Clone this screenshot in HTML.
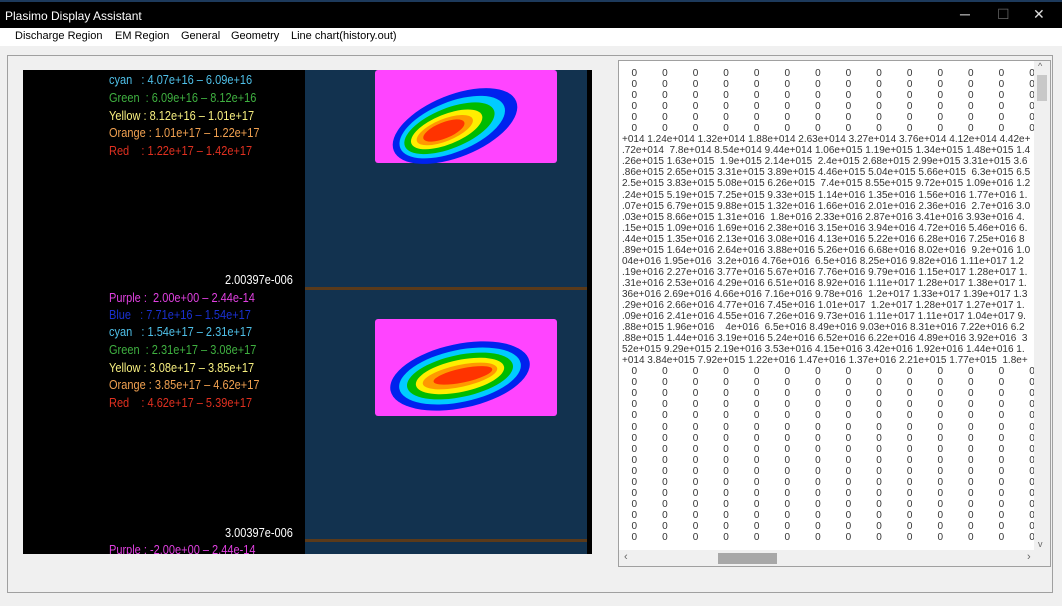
<!DOCTYPE html>
<html><head><meta charset="utf-8"><style>
*{margin:0;padding:0;box-sizing:border-box}
body{width:1062px;height:606px;background:#f0f0f0;font-family:"Liberation Sans",sans-serif;position:relative;overflow:hidden}
.title{position:absolute;left:0;top:0;width:1062px;height:28px;background:#000;color:#fff;font-size:12px;border-top:2px solid #1d3a5c}
.title span{position:absolute;left:5px;top:7px}
.wc{position:absolute;top:4px;color:#ddd;font-size:14px}
.menu{position:absolute;left:0;top:28px;width:1062px;height:18px;background:#fff;font-size:11px;color:#000}
.menu span{position:absolute;top:2px}
.grp{position:absolute;left:7px;top:55px;width:1046px;height:538px;border:1px solid #a0a0a0}
.img{position:absolute;left:23px;top:70px;width:569px;height:484px;background:#000;overflow:hidden}
.leg{position:absolute;font-family:"Liberation Sans Narrow","Liberation Sans",sans-serif;font-size:12.5px;white-space:pre;transform:scaleX(.88);transform-origin:left;line-height:14px}
.txt{position:absolute;left:618px;top:60px;width:433px;height:507px;background:#fff;border:1px solid #a0a0a0;overflow:hidden}
.rows{position:absolute;left:0;top:7px;font-size:10px;color:#333;line-height:11.05px}
.r{white-space:pre;height:11.05px;padding-left:3px}
.z{display:flex;padding-left:0}
.z b{font-weight:normal;width:30.6px;text-align:center;display:block}
</style></head><body>
<div class="title"><span>Plasimo Display Assistant</span><div class="wc" style="left:960px">─</div><div class="wc" style="left:997px;color:#666">☐</div><div class="wc" style="left:1033px">✕</div></div>
<div class="menu"><span style="left:15px">Discharge Region</span><span style="left:115px">EM Region</span><span style="left:181px">General</span><span style="left:231px">Geometry</span><span style="left:291px">Line chart(history.out)</span></div>
<div class="grp"></div>
<div class="img">
<svg width="569" height="484" style="position:absolute;left:0;top:0">
<rect x="282" y="0" width="282" height="484" fill="#12324f"/>
<rect x="282" y="217" width="282" height="3" fill="#5a3a1a"/>
<rect x="282" y="469" width="282" height="3" fill="#5a3a1a"/>
<rect x="352" y="0" width="182" height="93" rx="3" fill="#ff44ff"/>
<g transform="translate(432,56) rotate(-22)"><ellipse rx="66" ry="31" fill="#0022ee"/><ellipse rx="56" ry="25" fill="#00ccff" cx="-3"/><ellipse rx="48" ry="20" fill="#00bb00" cx="-6"/><ellipse rx="38" ry="15" fill="#ffee00" cx="-9"/><ellipse rx="30" ry="11" fill="#ff9900" cx="-11"/><ellipse rx="22" ry="8" fill="#ff3300" cx="-12"/></g>
<rect x="352" y="249" width="182" height="97" rx="3" fill="#ff44ff"/>
<g transform="translate(437,306) rotate(-12)"><ellipse rx="71" ry="32" fill="#0022ee"/><ellipse rx="62" ry="26" fill="#00ccff"/><ellipse rx="54" ry="21" fill="#00bb00"/><ellipse rx="45" ry="16" fill="#ffee00"/><ellipse rx="38" ry="11" fill="#ff9900"/><ellipse rx="30" ry="7" fill="#ff3300" cx="3"/></g>
</svg>
<div class="leg" style="left:86px;top:3px;color:#4fc0e8">cyan   : 4.07e+16 – 6.09e+16</div>
<div class="leg" style="left:86px;top:21px;color:#3fb040">Green  : 6.09e+16 – 8.12e+16</div>
<div class="leg" style="left:86px;top:39px;color:#f8f080">Yellow : 8.12e+16 – 1.01e+17</div>
<div class="leg" style="left:86px;top:56px;color:#f0a050">Orange : 1.01e+17 – 1.22e+17</div>
<div class="leg" style="left:86px;top:74px;color:#e03020">Red    : 1.22e+17 – 1.42e+17</div>
<div class="leg" style="left:202px;top:203px;color:#fff">2.00397e-006</div>
<div class="leg" style="left:86px;top:221px;color:#e040e0">Purple :  2.00e+00 – 2.44e-14</div>
<div class="leg" style="left:86px;top:238px;color:#1a30d0">Blue   : 7.71e+16 – 1.54e+17</div>
<div class="leg" style="left:86px;top:255px;color:#4fc0e8">cyan   : 1.54e+17 – 2.31e+17</div>
<div class="leg" style="left:86px;top:273px;color:#3fb040">Green  : 2.31e+17 – 3.08e+17</div>
<div class="leg" style="left:86px;top:291px;color:#f8f080">Yellow : 3.08e+17 – 3.85e+17</div>
<div class="leg" style="left:86px;top:308px;color:#f0a050">Orange : 3.85e+17 – 4.62e+17</div>
<div class="leg" style="left:86px;top:326px;color:#e03020">Red    : 4.62e+17 – 5.39e+17</div>
<div class="leg" style="left:202px;top:456px;color:#fff">3.00397e-006</div>
<div class="leg" style="left:86px;top:473px;color:#e040e0">Purple : -2.00e+00 – 2.44e-14</div>
</div>
<div class="txt">
<div class="rows" id="rows"></div>
<div style="position:absolute;right:0;top:0;width:16px;height:490px;background:#f0f0f0"><div style="position:absolute;left:3px;top:14px;width:10px;height:26px;background:#c8c8c8"></div><div style="position:absolute;left:4px;top:0;font-size:9px;color:#666">^</div><div style="position:absolute;left:4px;bottom:2px;font-size:9px;color:#666">v</div></div>
<div style="position:absolute;left:0;bottom:0;width:431px;height:16px;background:#f0f0f0"><div style="position:absolute;left:99px;top:3px;width:59px;height:11px;background:#a8a8a8"></div><div style="position:absolute;left:5px;top:1px;font-size:11px;color:#666">‹</div><div style="position:absolute;left:408px;top:1px;font-size:11px;color:#666">›</div></div>
</div>
<script>
var num=["+014 1.24e+014 1.32e+014 1.88e+014 2.63e+014 3.27e+014 3.76e+014 4.12e+014 4.42e+",
".72e+014  7.8e+014 8.54e+014 9.44e+014 1.06e+015 1.19e+015 1.34e+015 1.48e+015 1.4",
".26e+015 1.63e+015  1.9e+015 2.14e+015  2.4e+015 2.68e+015 2.99e+015 3.31e+015 3.6",
".86e+015 2.65e+015 3.31e+015 3.89e+015 4.46e+015 5.04e+015 5.66e+015  6.3e+015 6.5",
"2.5e+015 3.83e+015 5.08e+015 6.26e+015  7.4e+015 8.55e+015 9.72e+015 1.09e+016 1.2",
".24e+015 5.19e+015 7.25e+015 9.33e+015 1.14e+016 1.35e+016 1.56e+016 1.77e+016 1.",
".07e+015 6.79e+015 9.88e+015 1.32e+016 1.66e+016 2.01e+016 2.36e+016  2.7e+016 3.0",
".03e+015 8.66e+015 1.31e+016  1.8e+016 2.33e+016 2.87e+016 3.41e+016 3.93e+016 4.",
".15e+015 1.09e+016 1.69e+016 2.38e+016 3.15e+016 3.94e+016 4.72e+016 5.46e+016 6.",
".44e+015 1.35e+016 2.13e+016 3.08e+016 4.13e+016 5.22e+016 6.28e+016 7.25e+016 8",
".89e+015 1.64e+016 2.64e+016 3.88e+016 5.26e+016 6.68e+016 8.02e+016  9.2e+016 1.0",
"04e+016 1.95e+016  3.2e+016 4.76e+016  6.5e+016 8.25e+016 9.82e+016 1.11e+017 1.2",
".19e+016 2.27e+016 3.77e+016 5.67e+016 7.76e+016 9.79e+016 1.15e+017 1.28e+017 1.",
".31e+016 2.53e+016 4.29e+016 6.51e+016 8.92e+016 1.11e+017 1.28e+017 1.38e+017 1.",
"36e+016 2.69e+016 4.66e+016 7.16e+016 9.78e+016  1.2e+017 1.33e+017 1.39e+017 1.3",
".29e+016 2.66e+016 4.77e+016 7.45e+016 1.01e+017  1.2e+017 1.28e+017 1.27e+017 1.",
".09e+016 2.41e+016 4.55e+016 7.26e+016 9.73e+016 1.11e+017 1.11e+017 1.04e+017 9.",
".88e+015 1.96e+016    4e+016  6.5e+016 8.49e+016 9.03e+016 8.31e+016 7.22e+016 6.2",
".88e+015 1.44e+016 3.19e+016 5.24e+016 6.52e+016 6.22e+016 4.89e+016 3.92e+016  3",
"52e+015 9.29e+015 2.19e+016 3.53e+016 4.15e+016 3.42e+016 1.92e+016 1.44e+016 1.",
"+014 3.84e+015 7.92e+015 1.22e+016 1.47e+016 1.37e+016 2.21e+015 1.77e+015  1.8e+"];
var z='<div class="r z">'+'<b>0</b>'.repeat(14)+'</div>',h='';
for(var i=0;i<6;i++)h+=z;
num.forEach(function(s){h+='<div class="r">'+s+'</div>'});
for(i=0;i<16;i++)h+=z;
document.getElementById('rows').innerHTML=h;
</script>
</body></html>
